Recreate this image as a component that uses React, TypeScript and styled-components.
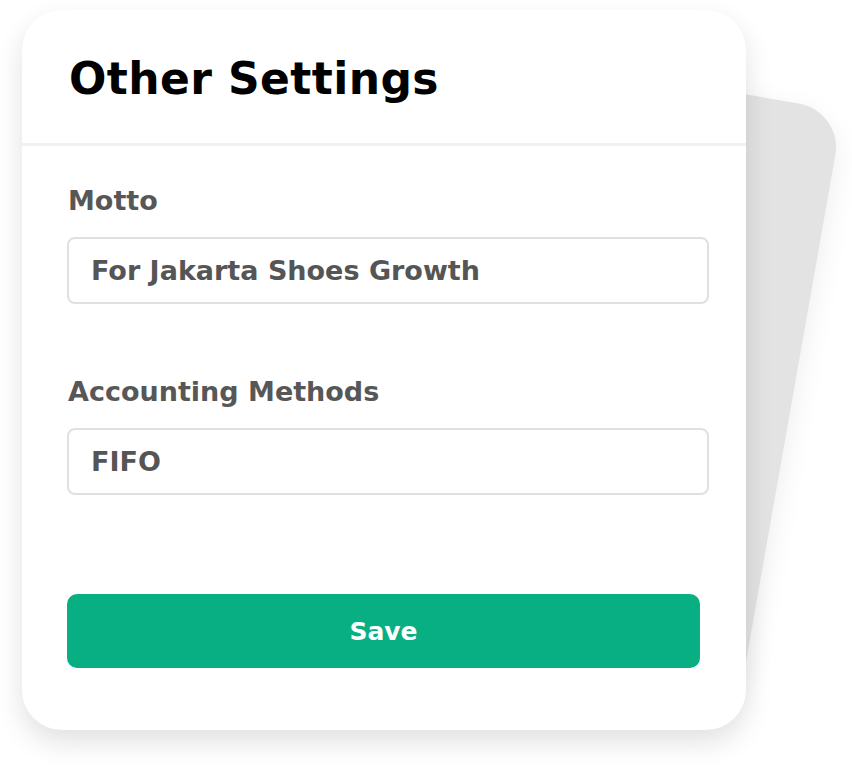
import React from "react";
import styled, { createGlobalStyle } from "styled-components";

const GlobalStyle = createGlobalStyle`
  html, body {
    margin: 0;
    padding: 0;
    background: #ffffff;
  }

  body {
    font-family: "DejaVu Sans", "Open Sans", sans-serif;
  }
`;

const Stage = styled.div`
  position: relative;
  width: 852px;
  height: 770px;
  padding: 10px 0 0 22px;
  box-sizing: border-box;
  overflow: hidden;
`;

// tilted sheet peeking out from behind the card
const BackCard = styled.div`
  position: absolute;
  left: 255px;
  top: 60px;
  width: 540px;
  height: 600px;
  border-radius: 44px;
  background-color: #e3e3e3;
  box-shadow: 0 10px 30px rgba(0, 0, 0, 0.08);
  transform: rotate(10deg);
`;

const Card = styled.div`
  position: relative;
  width: 724px;
  height: 720px;
  border-radius: 40px;
  background-color: #ffffff;
  box-shadow: 0 12px 28px rgba(0, 0, 0, 0.12);
  display: flex;
  flex-direction: column;
`;

const Header = styled.div`
  height: 136px;
  padding: 47px 0 0 47px;
  border-bottom: 3px solid #eef1f5;
  box-sizing: border-box;
  flex-shrink: 0;

  h1 {
    margin: 0;
    font-size: 44px;
    line-height: 44px;
    font-weight: 700;
    color: #000000;
    letter-spacing: 0.4px;
  }
`;

const Body = styled.form`
  padding: 40px 37px 0 45px;
  display: flex;
  flex-direction: column;
`;

const Field = styled.div<{ $gap: number }>`
  display: flex;
  flex-direction: column;
  gap: 21px;
  margin-bottom: ${(p) => p.$gap}px;
`;

const Label = styled.label`
  font-size: 27px;
  line-height: 30px;
  font-weight: 700;
  color: #575757;
  padding-left: 1px;
`;

const Input = styled.div`
  height: 67px;
  box-sizing: border-box;
  border: 2px solid #e0e0e0;
  border-radius: 8px;
  padding: 0 22px;
  display: flex;
  align-items: center;
  font-size: 27px;
  font-weight: 700;
  color: #555555;
`;

const SaveButton = styled.button`
  height: 74px;
  margin-right: 9px;
  padding: 0;
  border: none;
  border-radius: 10px;
  background-color: #08af83;
  color: #ffffff;
  font-family: inherit;
  font-size: 25px;
  font-weight: 700;
  cursor: pointer;
`;

const fields = [
  { id: "motto", label: "Motto", value: "For Jakarta Shoes Growth", gap: 73 },
  { id: "accounting", label: "Accounting Methods", value: "FIFO", gap: 99 },
];

const App = () => {
  return (
    <>
      <GlobalStyle />
      <Stage>
        <BackCard />
        <Card>
          <Header>
            <h1>Other Settings</h1>
          </Header>
          <Body onSubmit={(e) => e.preventDefault()}>
            {fields.map((f) => (
              <Field key={f.id} $gap={f.gap}>
                <Label>{f.label}</Label>
                <Input>{f.value}</Input>
              </Field>
            ))}
            <SaveButton type="submit">Save</SaveButton>
          </Body>
        </Card>
      </Stage>
    </>
  );
};

export default App;
